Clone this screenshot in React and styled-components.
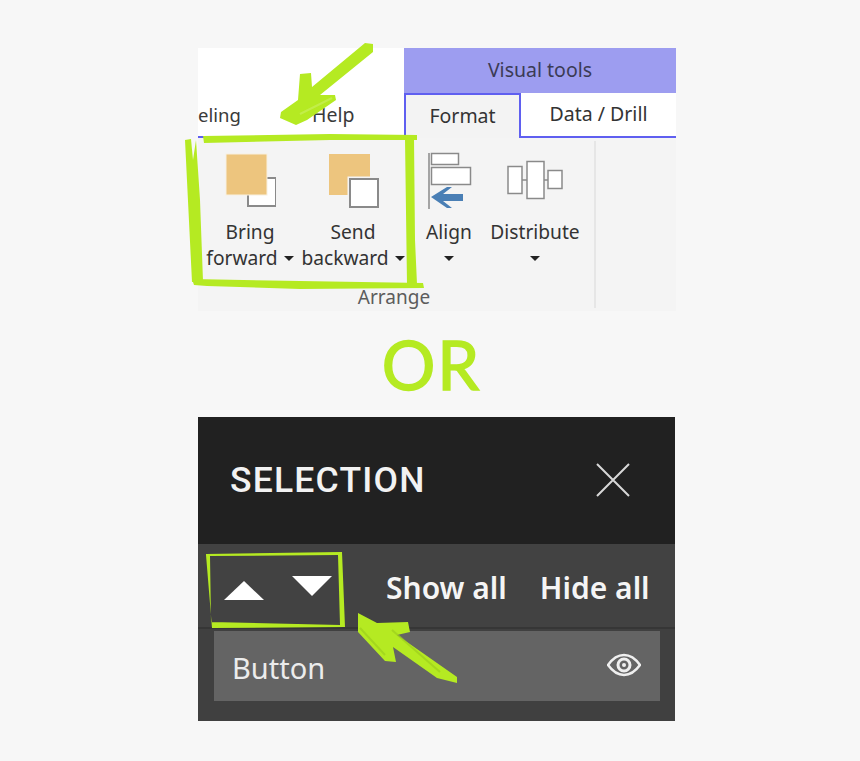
import React from "react";
import styled, { createGlobalStyle } from "styled-components";

const Global = createGlobalStyle`
  html, body { margin: 0; padding: 0; background: #f7f7f7; }
  body { font-family: "Noto Sans", "Open Sans", sans-serif; }
`;

const Stage = styled.div`
  position: relative;
  width: 860px;
  height: 761px;
  padding: 48px 0 0 198px;
  box-sizing: border-box;
  overflow: hidden;
`;
const Figure = styled.div`
  width: 478px;
  display: flex;
  flex-direction: column;
`;

/* ribbon */
const TabBar = styled.div`
  display: flex;
  height: 90px;
  background: #fff;
`;
const PlainTabs = styled.div`
  width: 206px;
  display: flex;
  align-items: flex-end;
  border-bottom: 2px solid #5f5ff0;
  box-sizing: border-box;
  color: #3a3a3a;
  font-size: 19.5px;
  line-height: 26px;
  padding-bottom: 8px;
`;
const PartTab = styled.div`
  width: 40px;
  margin-right: 74px;
  white-space: nowrap;
  font-size: 18.5px;
`;
const ContextTabs = styled.div`
  width: 272px;
  display: flex;
  flex-direction: column;
`;
const ContextTitle = styled.div`
  height: 45px;
  box-sizing: border-box;
  padding-bottom: 3px;
  background: #9d9df0;
  color: #3b3b55;
  font-size: 19.5px;
  display: flex;
  align-items: center;
  justify-content: center;
`;
const ContextRow = styled.div`
  flex: 1;
  display: flex;
`;
const Tab = styled.div`
  box-sizing: border-box;
  width: ${(p) => p.$w}px;
  display: flex;
  align-items: center;
  justify-content: center;
  font-size: 19.5px;
  padding-bottom: 2px;
  color: #333;
  background: ${(p) => (p.$active ? "#f3f3f3" : "#fff")};
  border-top: ${(p) => (p.$active ? "2px solid #5f5ff0" : "0")};
  border-left: ${(p) => (p.$active ? "2px solid #5f5ff0" : "0")};
  border-right: ${(p) => (p.$active ? "2px solid #5f5ff0" : "0")};
  border-bottom: ${(p) => (p.$active ? "0" : "2px solid #5f5ff0")};
`;
const Ribbon = styled.div`
  height: 173px;
  background: #f4f4f4;
  display: flex;
`;
const Group = styled.div`
  width: 398px;
  margin: 3px 0;
  border-right: 2px solid #e6e6e6;
  box-sizing: border-box;
  display: flex;
  flex-direction: column;
  color: #333;
`;
const Tools = styled.div`
  flex: 1;
  display: flex;
`;
const Tool = styled.div`
  width: ${(p) => p.$w}px;
  display: flex;
  flex-direction: column;
  align-items: center;
  padding-top: 10px;
  font-size: 19.2px;
  line-height: 26px;
  white-space: nowrap;
`;
const ToolIcon = styled.svg`
  width: ${(p) => p.$w}px;
  height: 60px;
  margin-bottom: 8px;
  display: block;
`;
const Caret = styled.span`
  display: inline-block;
  width: 0;
  height: 0;
  margin-left: ${(p) => (p.$alone ? 0 : 6)}px;
  border-left: 5px solid transparent;
  border-right: 5px solid transparent;
  border-top: 5px solid #222;
  vertical-align: 4px;
`;
const GroupLabel = styled.div`
  height: 26px;
  line-height: 26px;
  font-size: 19px;
  color: #5c5c5c;
  text-align: center;
  padding-right: 4px;
  margin-bottom: -2px;
`;

const OrRow = styled.div`
  height: 106px;
  display: flex;
  align-items: center;
  justify-content: center;
  padding-right: 11px;
`;
const OrText = styled.div`
  font-family: "Lato", sans-serif;
  font-size: 67px;
  line-height: 1;
  color: #b5ea22;
  letter-spacing: 2px;
  -webkit-text-stroke: 1.5px #b5ea22;
`;

/* selection pane */
const Pane = styled.div`
  width: 477px;
  height: 304px;
  background: #404040;
  display: flex;
  flex-direction: column;
`;
const PaneHeader = styled.div`
  height: 127px;
  background: #212121;
  display: flex;
  align-items: center;
  justify-content: space-between;
  padding: 0 45px 2px 32px;
  box-sizing: border-box;
`;
const PaneTitle = styled.div`
  font-family: "Roboto", sans-serif;
  font-size: 35.5px;
  font-weight: 500;
  color: #f2f2f2;
  letter-spacing: 1.2px;
`;
const Toolbar = styled.div`
  height: 85px;
  display: flex;
  align-items: center;
  border-bottom: 2px solid #363636;
  box-sizing: border-box;
  padding-left: 26px;
  background: #424242;
`;
const Tri = styled.span`
  width: 0;
  height: 0;
  border-left: 20px solid transparent;
  border-right: 20px solid transparent;
  ${(p) =>
    p.$up
      ? "border-bottom: 19px solid #fff; margin: 9px 28px 0 0;"
      : "border-top: 20px solid #fff; margin: 0 54px 0 0;"}
`;
const ToolbarLink = styled.div`
  font-size: 30px;
  font-weight: 600;
  color: #f5f5f5;
  margin: 3px 33px 0 0;
  white-space: nowrap;
`;
const ItemRow = styled.div`
  margin: 2px 15px 0 16px;
  height: 70px;
  background: #646464;
  display: flex;
  align-items: center;
  justify-content: space-between;
  padding: 0 19px 0 18px;
`;
const ItemLabel = styled.div`
  font-size: 29px;
  color: #ececec;
  margin-top: 2px;
`;
const EyeIcon = styled.svg`
  margin-bottom: 2px;
`;

const Overlay = styled.svg`
  position: absolute;
  inset: 0;
  width: 860px;
  height: 761px;
  pointer-events: none;
`;

export default function App() {
  return (
    <Stage>
      <Global />
      <Figure>
        <TabBar>
          <PlainTabs>
            <PartTab>eling</PartTab>
            <div>Help</div>
          </PlainTabs>
          <ContextTabs>
            <ContextTitle>Visual tools</ContextTitle>
            <ContextRow>
              <Tab $w={117} $active>Format</Tab>
              <Tab $w={155}>Data / Drill</Tab>
            </ContextRow>
          </ContextTabs>
        </TabBar>
        <Ribbon>
          <Group>
            <Tools>
              <Tool $w={104}>
                <ToolIcon $w={52} viewBox="-2 0 52 60">
                  <rect x="22" y="27" width="28" height="28" fill="#fff" stroke="#8a8a8a" strokeWidth="2" />
                  <rect x="0" y="3" width="41" height="41" fill="#edc57e" stroke="#f8f0e0" strokeWidth="1" />
                </ToolIcon>
                <div>Bring</div>
                <div>forward<Caret /></div>
              </Tool>
              <Tool $w={102}>
                <ToolIcon $w={52} viewBox="-2 0 52 60">
                  <rect x="0" y="3" width="41" height="41" fill="#edc57e" />
                  <rect x="21" y="28" width="28" height="28" fill="#fff" stroke="#f4f4f4" strokeWidth="5" />
                  <rect x="21" y="28" width="28" height="28" fill="#fff" stroke="#8a8a8a" strokeWidth="2" />
                </ToolIcon>
                <div>Send</div>
                <div>backward<Caret /></div>
              </Tool>
              <Tool $w={90}>
                <ToolIcon $w={46} viewBox="-2 0 46 60">
                  <path d="M1 2V58" stroke="#8a8a8a" strokeWidth="1.5" />
                  <rect x="3.5" y="2.5" width="27" height="11" fill="#fff" stroke="#8a8a8a" strokeWidth="1.5" />
                  <rect x="3.5" y="16.5" width="39" height="17" fill="#fff" stroke="#8a8a8a" strokeWidth="1.5" />
                  <path d="M3 46L19 36H24L15 43H35V50H15L24 57H19Z" fill="#4a7fb5" />
                </ToolIcon>
                <div>Align</div>
                <div><Caret $alone /></div>
              </Tool>
              <Tool $w={82}>
                <ToolIcon $w={56} viewBox="0 0 56 60">
                  <path d="M14 29H20M37 29H41" stroke="#8a8a8a" strokeWidth="1.5" />
                  <rect x="1" y="15.5" width="14" height="27" fill="#fff" stroke="#8a8a8a" strokeWidth="1.5" />
                  <rect x="20" y="10.5" width="17" height="37" fill="#fff" stroke="#8a8a8a" strokeWidth="1.5" />
                  <rect x="41" y="19.5" width="14" height="18" fill="#fff" stroke="#8a8a8a" strokeWidth="1.5" />
                </ToolIcon>
                <div>Distribute</div>
                <div><Caret $alone /></div>
              </Tool>
            </Tools>
            <GroupLabel>Arrange</GroupLabel>
          </Group>
        </Ribbon>
        <OrRow>
          <OrText>OR</OrText>
        </OrRow>
        <Pane>
          <PaneHeader>
            <PaneTitle>SELECTION</PaneTitle>
            <svg width="34" height="34" viewBox="0 0 34 34">
              <path d="M1 1L33 33M33 1L1 33" stroke="#d8d8d8" strokeWidth="2" fill="none" />
            </svg>
          </PaneHeader>
          <Toolbar>
            <Tri $up />
            <Tri />
            <ToolbarLink>Show all</ToolbarLink>
            <ToolbarLink>Hide all</ToolbarLink>
          </Toolbar>
          <ItemRow>
            <ItemLabel>Button</ItemLabel>
            <EyeIcon width="34" height="24" viewBox="0 0 34 24">
              <path d="M1 12C6 5 11 2 17 2S28 5 33 12C28 19 23 22 17 22S6 19 1 12Z" fill="none" stroke="#efefef" strokeWidth="2.6" />
              <circle cx="17" cy="12" r="6" fill="none" stroke="#efefef" strokeWidth="3" />
              <circle cx="17" cy="12" r="2" fill="#efefef" />
            </EyeIcon>
          </ItemRow>
        </Pane>
      </Figure>
      <Overlay viewBox="0 0 860 761">
        <g fill="#b5ea22">
          <path d="M365 43L373 44L373 52L320 95L335 95L336 100L307 120L296 125L280 118L281 112L298 100L300 74L311 73L312 87Z" />
          <path d="M203 136L330 134L417 135L417 140L330 140L204 143Z" />
          <path d="M185 140L191 139L193 160L196 140L200 200L203 281L192 282Z" />
          <path d="M405 139L414 138L415 240L417 284L407 284Z" />
          <path d="M192 279L300 281L423 283L424 288L300 289L207 286L194 285Z" />
          <path d="M206 554L340 552L342 552L345 627L212 628L206 555ZM210 556L211 622L340 625L338 555Z" fillRule="evenodd" />
          <path d="M358 613L377 623L408 622L410 632L397 635L457 677L457 683L437 678L393 647L396 662L385 661L358 632Z" />
        </g>
        <path d="M360 628L385 655M392 630L440 672" stroke="#9ccf1c" strokeWidth="2" fill="none" opacity="0.7" />
        <path d="M300 114L332 98" stroke="#c8ef5a" strokeWidth="2" fill="none" opacity="0.7" />
      </Overlay>
    </Stage>
  );
}
